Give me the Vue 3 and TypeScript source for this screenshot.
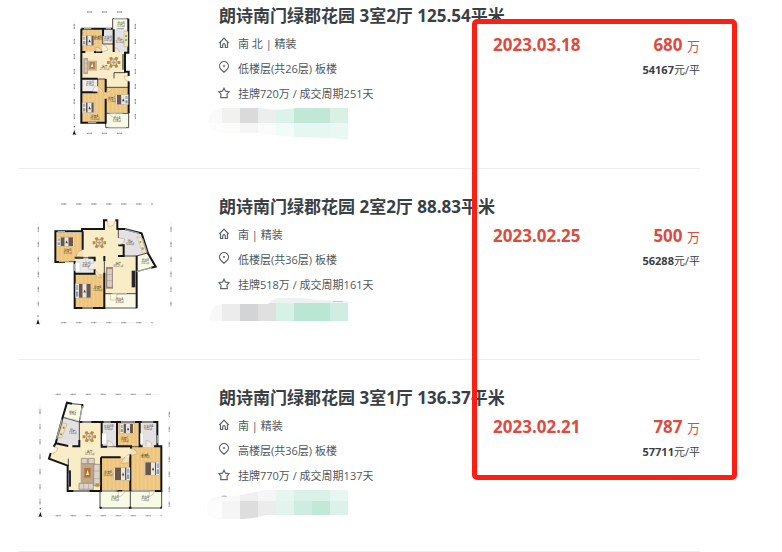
<script setup lang="ts">
type Shape = { d: string; fill: string }
type Spot = { x: number; y: number; w: number; h: number; side?: 'left' | 'right' }
type Label = { x: number; y: number; name: string; area: string }
type Plan = {
  shift: string
  rooms: Shape[]
  walls: string
  thin: string
  doors: string
  windows: string
  beds: Spot[]
  table: { x: number; y: number }
  labels: Label[]
  rulers: string
  compass: { x: number; y: number }
  kind: 'tall' | 'wide' | 'large'
}
type Cell = [number, number, number, number, string]
type Listing = {
  title: string
  facing: string
  floor: string
  cycle: string
  date: string
  total: string
  unit: string
  plan: Plan
  cells: Cell[]
  mask: string
  top: number
}

const wood = 'url(#wood)'
const cream = '#f9edc8'
const grey = '#e3e1e3'
const pale = '#f8fae6'

const tall: Plan = {
  kind: 'tall',
  shift: 'translate(105 3)',
  rooms: [
    { d: 'M158 56H205V88H158Z', fill: pale },
    { d: 'M66 155H195V215H206V262H137V237H66Z', fill: cream },
    { d: 'M66 88H127V155H66Z', fill: wood },
    { d: 'M129 88H160V132H129Z', fill: grey },
    { d: 'M129 132H162V160H129Z', fill: cream },
    { d: 'M163 88H205V156H163Z', fill: grey },
    { d: 'M66 237H137V368H66Z', fill: wood },
    { d: 'M66 237H113V277H66Z', fill: '#eeedef' },
    { d: 'M137 262H206V338H137Z', fill: wood },
    { d: 'M137 340H206V383H137Z', fill: pale }
  ],
  walls: 'M64 86H158M64 86V368H137V341M205 56V158H195V215H206V228M206 244V340M64 236H113M64 156H76M102 156H127M66 277H112M129 88V108M161 88V156M137 237V277M137 296V368',
  thin: 'M158 56H205M158 56V86M128 108V132H160M113 237V258M113 237H137V262M162 218H195M162 218V235M137 262H206M137 340H206M137 340V383H206V340',
  doors: 'M108 157V142Q124 142 124 156M129 134Q141 136 144 150L130 155M163 144Q178 144 178 157M206 228H193Q193 243 206 244M113 258Q100 258 98 275L113 276M113 258Q128 266 133 288M147 338Q150 350 160 352Q168 352 169 340M137 276Q153 276 157 263',
  windows: 'M72 86H94M137 86H153M170 86H192M84 368H109M162 56H200M145 383H198M163 340H188',
  beds: [
    { x: 67, y: 106, w: 37, h: 31, side: 'left' },
    { x: 67, y: 307, w: 37, h: 31, side: 'left' },
    { x: 168, y: 284, w: 37, h: 30, side: 'right' }
  ],
  table: { x: 161, y: 187 },
  labels: [
    { x: 114, y: 113, name: '卧室B', area: '8.35㎡' },
    { x: 144, y: 114, name: '卫生间', area: '3.41㎡' },
    { x: 180, y: 121, name: '厨房', area: '6.12㎡' },
    { x: 183, y: 72, name: '阳台B', area: '3.20㎡' },
    { x: 134, y: 202, name: '客厅', area: '27.31㎡' },
    { x: 90, y: 250, name: '卫生间', area: '4.16㎡' },
    { x: 104, y: 352, name: '卧室A', area: '15.03㎡' },
    { x: 155, y: 297, name: '卧室C', area: '11.4㎡' },
    { x: 171, y: 358, name: '阳台A', area: '6.08㎡' }
  ],
  rulers: 'M66 36H205M43 57V388M226 57V380M66 400H205',
  compass: { x: 43, y: 399 }
}

const wide: Plan = {
  kind: 'wide',
  shift: 'translate(0 0)',
  rooms: [
    { d: 'M173 120H237V93H277V118H280V166H296V198H335V311H238V252H208V203H173Z', fill: cream },
    { d: 'M93 128H173V213H93Z', fill: wood },
    { d: 'M280 119L348 131L367 188L335 199H296V167H280Z', fill: grey },
    { d: 'M335 199L367 189L391 230L335 245Z', fill: pale },
    { d: 'M149 203H208V250H149Z', fill: '#e9e8ea' },
    { d: 'M149 252H238V354H149Z', fill: wood },
    { d: 'M240 311H335V353H240Z', fill: pale }
  ],
  walls: 'M120 216H91V124H171V117H237V91H247M271 91H277V117H298L350 130L369 190L392 230L378 233M149 213V354H238V248M173 124V179M149 203H175M190 203H209V214M209 238V251H149M280 166H296V198H279M335 197V355M238 198V214',
  thin: 'M120 215H149M280 118V144M335 245L390 230M296 198H335L367 189M238 214V354H335M240 311H335M173 203H209',
  doors: 'M247 92L250 110Q267 112 270 92M281 143L299 147Q298 162 281 165M173 181Q158 180 154 199L172 201M210 240L230 263Q213 262 211 251M256 311V330H273Q276 319 276 311M209 218Q192 218 189 237L208 239',
  windows: 'M98 125H120M300 119L342 130M352 145L366 188M102 215H132M172 354H204M250 354H326M149 222V242M335 245L380 232M262 311H306',
  beds: [
    { x: 96, y: 141, w: 51, h: 28, side: 'left' },
    { x: 151, y: 281, w: 49, h: 43, side: 'left' }
  ],
  table: { x: 223, y: 158 },
  labels: [
    { x: 128, y: 183, name: '卧室B', area: '9.22㎡' },
    { x: 316, y: 157, name: '厨房', area: '6.60㎡' },
    { x: 361, y: 214, name: '阳台B', area: '3.61㎡' },
    { x: 184, y: 222, name: '卫生间', area: '4.46㎡' },
    { x: 280, y: 223, name: '客厅', area: '30.21㎡' },
    { x: 218, y: 295, name: '卧室A', area: '13.45㎡' },
    { x: 284, y: 331, name: '阳台A', area: '4.93㎡' }
  ],
  rulers: 'M94 42H384M40 95V349M438 95V349M94 398H384',
  compass: { x: 39, y: 397 }
}

const large: Plan = {
  kind: 'large',
  shift: 'translate(0 -3)',
  rooms: [
    { d: 'M125 70L172 74L163 126L115 112Z', fill: pale },
    { d: 'M163 128H229V200H318V232H229V332H130V258L73 236L92 192L163 200Z', fill: cream },
    { d: 'M114 112L163 126V199L94 190Z', fill: grey },
    { d: 'M230 128H276V199H230Z', fill: grey },
    { d: 'M277 128H343V200H277Z', fill: wood },
    { d: 'M344 128H397V199H344Z', fill: grey },
    { d: 'M230 232H316V332H230Z', fill: wood },
    { d: 'M317 200H410V332H317Z', fill: wood },
    { d: 'M225 333H315V384H225Z', fill: pale },
    { d: 'M316 333H410V384H316Z', fill: pale }
  ],
  walls: 'M141 71L126 68L113 112L92 190L86 200M77 219L72 236L128 257V333H228V232M164 126H397V199H409V333H390M92 190L130 198M142 199H163V180M230 128V200H246M276 126V199H318V206M344 126V199H353M387 199H409M228 232H287M316 223V333M272 333H292M172 72V83M224 383H230M312 383H319M406 383H410',
  thin: 'M140 71L172 74L163 126M115 112L163 126V181M247 200H277M277 200H344M225 333H410M225 333V384H410V333M316 333V384M130 236V258',
  doors: 'M88 201L98 205Q94 222 78 219M120 112Q137 122 149 118L163 125M247 200V182Q265 184 265 199M314 222Q297 228 288 250L310 248M317 205Q334 208 337 222L318 227M363 199V182Q381 182 381 199M280 333V350Q296 348 298 334M373 333V350Q386 347 389 334',
  windows: 'M172 126H199M236 126H257M288 126H330M350 126H385M95 177L111 118M132 278V316M145 333H194M397 166V190M234 384H308M322 384H404M324 333H371M234 333H278M172 78L165 119',
  beds: [
    { x: 285, y: 131, w: 42, h: 29, side: 'left' },
    { x: 267, y: 262, w: 48, h: 39, side: 'right' },
    { x: 358, y: 246, w: 46, h: 40, side: 'right' }
  ],
  table: { x: 193, y: 170 },
  labels: [
    { x: 143, y: 98, name: '阳台C', area: '3.7㎡' },
    { x: 143, y: 154, name: '厨房', area: '7.62㎡' },
    { x: 251, y: 141, name: '卫生间B', area: '5.32㎡' },
    { x: 299, y: 178, name: '卧室C', area: '7.68㎡' },
    { x: 370, y: 141, name: '卫生间A', area: '5.62㎡' },
    { x: 194, y: 216, name: '客厅', area: '37.51㎡' },
    { x: 249, y: 279, name: '卧室B', area: '14.22㎡' },
    { x: 360, y: 227, name: '卧室A', area: '18.76㎡' },
    { x: 270, y: 354, name: '阳台B', area: '5.75㎡' },
    { x: 361, y: 354, name: '阳台A', area: '7.24㎡' }
  ],
  rulers: 'M77 43H406M45 73V396M433 80V380M77 407H410',
  compass: { x: 46, y: 405 }
}

const listings: Listing[] = [
  {
    title: '朗诗南门绿郡花园 3室2厅 125.54平米',
    facing: '南 北 | 精装',
    floor: '低楼层(共26层) 板楼',
    cycle: '挂牌720万 / 成交周期251天',
    date: '2023.03.18',
    total: '680',
    unit: '54167',
    plan: tall,
    top: 315,
    mask: 'M66 324H175Q215 331 255 328L290 324H444V419L390 414L280 411L175 399H66Q25 392 25 362Q28 328 66 324Z',
    cells: [
      [20, 324, 46, 45, '#fafafa'], [66, 324, 54, 45, '#f1f1f0'], [120, 324, 54, 45, '#dadada'],
      [174, 324, 54, 45, '#eceded'], [228, 324, 54, 45, '#dcf3ea'], [282, 324, 108, 45, '#c1e8d7'],
      [390, 324, 54, 45, '#d9f0e5'], [20, 369, 100, 51, '#fcfcfb'], [120, 369, 54, 51, '#f5f5f6'],
      [174, 369, 54, 51, '#fafbfb'], [228, 369, 54, 51, '#f1fbf8'], [282, 369, 108, 51, '#e6f6f1'],
      [390, 369, 54, 51, '#eaf8f4']
    ]
  },
  {
    title: '朗诗南门绿郡花园 2室2厅 88.83平米',
    facing: '南 | 精装',
    floor: '低楼层(共36层) 板楼',
    cycle: '挂牌518万 / 成交周期161天',
    date: '2023.02.25',
    total: '500',
    unit: '56288',
    plan: wide,
    top: 318,
    mask: 'M66 342H205Q215 324 240 324H310Q350 330 444 334L458 338H444V393H30Q28 345 66 342Z',
    cells: [
      [200, 324, 258, 15, '#edf2f0'], [20, 339, 46, 54, '#f8f8f8'], [66, 339, 54, 54, '#ececec'],
      [120, 339, 54, 54, '#d2d4d6'], [174, 339, 54, 54, '#e0e0e0'], [228, 339, 54, 54, '#d6f1e6'],
      [282, 339, 108, 54, '#bae7d4'], [390, 339, 54, 54, '#d0ede1'], [400, 332, 30, 4, '#a9dcc6']
    ]
  },
  {
    title: '朗诗南门绿郡花园 3室1厅 136.37平米',
    facing: '南 | 精装',
    floor: '高楼层(共36层) 板楼',
    cycle: '挂牌770万 / 成交周期137天',
    date: '2023.02.21',
    total: '787',
    unit: '57711',
    plan: large,
    top: 321,
    mask: 'M64 350Q72 342 80 349L120 345Q160 338 190 330H444V405H200Q160 416 130 417H45Q20 415 20 382Q22 350 64 350Z',
    cells: [
      [20, 330, 100, 32, '#f9f9f9'], [120, 330, 54, 32, '#f0f0f0'], [174, 330, 54, 32, '#f6f6f6'],
      [228, 330, 54, 32, '#e6f6f0'], [282, 330, 108, 32, '#d9f1e7'], [390, 330, 54, 32, '#e6f6f1'],
      [20, 362, 46, 55, '#fcfcfc'], [66, 362, 54, 55, '#f5f5f5'], [120, 362, 54, 55, '#dddddd'],
      [174, 362, 54, 55, '#ececec'], [228, 362, 54, 55, '#e3f4ee'], [282, 362, 54, 55, '#ceecdf'],
      [336, 362, 54, 55, '#c2e8d8'], [390, 362, 54, 55, '#dcf2e9'], [64, 344, 16, 6, '#c4c6c7']
    ]
  }
]
</script>

<template>
  <main class="page">
    <svg class="defs" aria-hidden="true">
      <defs>
        <pattern id="wood" width="12" height="24" patternUnits="userSpaceOnUse">
          <rect width="12" height="24" fill="#eec780" />
          <rect width="4" height="24" fill="#f1cd8a" />
          <path d="M8 0V24" stroke="#e8bf72" />
        </pattern>
      </defs>
    </svg>

    <ul class="list">
      <li v-for="(item, i) in listings" :key="item.title" class="row">
        <a class="thumb" href="#" :aria-label="item.title">
          <svg class="plan" viewBox="0 0 480 450" aria-hidden="true">
            <g :transform="item.plan.shift">
              <path v-for="room in item.plan.rooms" :key="room.d" :d="room.d" :fill="room.fill" />
              <path :d="item.plan.thin" fill="none" stroke="#4e4a48" stroke-width="3" />
              <path :d="item.plan.walls" fill="none" stroke="#151515" stroke-width="6" />
              <path :d="item.plan.windows" fill="none" stroke="#a9a9a9" stroke-width="4" />
              <path :d="item.plan.doors" fill="#fff8e4" fill-opacity="0.5" stroke="#8b7c62" stroke-width="1" />

              <g v-for="bed in item.plan.beds" :key="bed.x + '-' + bed.y">
                <rect :x="bed.x" :y="bed.y" :width="bed.w" :height="bed.h" fill="#f1eeec" stroke="#a79682" />
                <rect :x="bed.side === 'left' ? bed.x + 11 : bed.x + 3" :y="bed.y + 1" :width="bed.w - 14" :height="bed.h - 2" fill="#6b5648" />
                <rect :x="bed.x + bed.w / 2 - 3" :y="bed.y + 1" width="12" :height="bed.h - 2" fill="#eae6e4" />
                <path :d="`M${bed.x + bed.w / 2} ${bed.y + bed.h / 2 + 5}l3 -9l4 9z`" fill="#3c3834" />
                <rect :x="bed.side === 'left' ? bed.x + 2 : bed.x + bed.w - 9" :y="bed.y + 4" width="7" :height="bed.h / 2 - 6" fill="#a4b4be" />
                <rect :x="bed.side === 'left' ? bed.x + 2 : bed.x + bed.w - 9" :y="bed.y + bed.h / 2 + 2" width="7" :height="bed.h / 2 - 6" fill="#7fa2b4" />
              </g>

              <g :transform="`translate(${item.plan.table.x} ${item.plan.table.y})`">
                <path d="M-14 -14l8 -3 5 8 -8 6zM14 -14l-8 -3 -5 8 8 6zM-14 14l8 3 5 -8 -8 -6zM14 14l-8 3 -5 -8 8 -6zM-20 -4h8v9h-8zM12 -4h8v9h-8z" fill="#c2863f" />
                <circle r="10" fill="#e9d9b9" stroke="#a87942" stroke-width="2" />
                <path d="M-6 0H6M0 -6V6" stroke="#8b9f9a" stroke-width="3" />
              </g>

              <g v-if="item.plan.kind === 'tall'">
                <path d="M70 174H84V222H70Z" fill="#b6a799" />
                <path d="M73 178H82V218H73ZM73 191H82M73 205H82" fill="#d7cabb" stroke="#9a8a7c" />
                <rect x="84" y="182" width="27" height="30" fill="#c5b49d" />
                <rect x="88" y="186" width="17" height="21" fill="#b58547" />
                <path d="M92 201L97 190L100 201Z" fill="#eee" />
                <path d="M192 94H204V140H192Z" fill="#eee8b8" stroke="#9c9370" />
                <circle cx="198" cy="108" r="3" fill="#8c8058" /><circle cx="198" cy="120" r="3" fill="#8c8058" />
                <path d="M189 162V209" stroke="#4a4541" stroke-width="4" />
              </g>
              <g v-else-if="item.plan.kind === 'wide'">
                <path d="M243 231H264V296H243Z" fill="#9c8579" />
                <path d="M246 236H262V291H246ZM246 254H262M246 272H262" fill="#d9cdc5" stroke="#8b766b" />
                <rect x="320" y="242" width="11" height="50" fill="#292725" />
                <path d="M336 140L350 144L363 186L353 190Z" fill="#f3ecc4" stroke="#9a8b60" />
                <circle cx="346" cy="156" r="3" fill="#b09355" /><circle cx="353" cy="176" r="4" fill="#aaa38f" />
                <rect x="151" y="217" width="14" height="29" rx="3" fill="#fff" stroke="#aaa" />
                <path d="M182 204V216M150 203H200" stroke="#aaa" />
              </g>
              <g v-else>
                <rect x="167" y="250" width="45" height="59" fill="#c1a58b" />
                <path d="M169 235H187V251H169ZM190 235H208V251H190ZM206 253H225V317H206ZM162 310H205V328H162Z" fill="#dbd2c8" stroke="#897a6d" stroke-width="2" />
                <path d="M206 273H225M206 296H225M176 310V328M191 310V328" stroke="#897a6d" />
                <rect x="178" y="264" width="19" height="29" fill="#ad7637" />
                <path d="M183 285L188 269L192 285Z" fill="#f3e6c2" />
                <rect x="131" y="271" width="7" height="49" fill="#292725" />
                <path d="M113 128L126 132L110 174L99 172Z" fill="#eee3b2" stroke="#8c8058" />
                <circle cx="116" cy="143" r="3" fill="#8c8058" /><circle cx="108" cy="163" r="3" fill="#8c8058" />
                <rect x="211" y="310" width="11" height="10" fill="#c98b31" />
                <path d="M231 160H245V192H231ZM346 160H355V192H346Z" fill="#fff" stroke="#bbb" />
              </g>

              <g v-for="label in item.plan.labels" :key="label.name + label.x" class="room-name">
                <text :x="label.x" :y="label.y">{{ label.name }}</text>
                <text :x="label.x" :y="label.y + 8">{{ label.area }}</text>
              </g>

              <path :d="item.plan.rulers" fill="none" stroke="#dedede" stroke-width="1" />
              <path :d="item.plan.rulers" fill="none" stroke="#969696" stroke-width="4" stroke-dasharray="3 1 3 1 3 1 3 30" stroke-dashoffset="-15" />
              <g :transform="`translate(${item.plan.compass.x} ${item.plan.compass.y})`">
                <circle r="8" fill="none" stroke="#ddd" />
                <path d="M0 -9L5 6L0 4L-5 6Z" fill="#111" />
                <rect x="-2" y="-21" width="4" height="4" fill="#777" />
              </g>
            </g>
          </svg>
        </a>

        <div class="info">
          <h2 class="title"><a href="#">{{ item.title }}</a></h2>
          <p class="fact">
            <svg class="icon" viewBox="0 0 12 12" aria-hidden="true">
              <path d="M1.300 6L6 1.200L10.700 6M2.500 5V10.500H4.700V8A1.300 1.300 0 0 1 7.300 8V10.500H9.500V5" />
            </svg>
            <span>{{ item.facing }}</span>
          </p>
          <p class="fact">
            <svg class="icon pin" viewBox="0 0 12 12" aria-hidden="true">
              <path d="M6 11.200L2.800 8.200A4.500 4.500 0 1 1 9.200 8.200Z" />
              <circle class="dot" cx="6" cy="5" r="1" />
            </svg>
            <span>{{ item.floor }}</span>
          </p>
          <p class="fact">
            <svg class="icon" viewBox="0 0 12 12" aria-hidden="true">
              <path d="M6 1.200L7.500 4.200L11 4.700L9 7.200L9.300 10.700H2.700L3 7.200L1 4.700L4.500 4.200Z" />
            </svg>
            <span>{{ item.cycle }}</span>
          </p>
          <svg class="mosaic" :viewBox="`18 ${item.top} 450 105`" aria-hidden="true" shape-rendering="crispEdges">
            <clipPath :id="`mask-${i}`"><path :d="item.mask" /></clipPath>
            <g :clip-path="`url(#mask-${i})`">
              <rect v-for="(c, n) in item.cells" :key="n" :x="c[0]" :y="c[1]" :width="c[2]" :height="c[3]" :fill="c[4]" />
            </g>
          </svg>
        </div>

        <div class="deal">
          <time class="date">{{ item.date }}</time>
          <div class="price">
            <p class="total"><b>{{ item.total }}</b> <span class="wan">万</span></p>
            <p class="unit"><b>{{ item.unit }}</b>元/平</p>
          </div>
        </div>
      </li>
    </ul>

    <div class="marker"></div>
  </main>
</template>

<style>
body {
  margin: 0;
  background: #fff;
}
</style>

<style scoped>
.page {
  position: relative;
  overflow: hidden;
  font-family: "Open Sans", "Noto Sans CJK SC", sans-serif;
  font-size: 11px;
  color: #394043;
}
.defs {
  position: absolute;
  width: 0;
  height: 0;
}
.list {
  list-style: none;
  margin: -22px 82px 0 18px;
  padding: 0;
}
.row {
  display: grid;
  grid-template-columns: 201px minmax(0, 1fr) 207px;
  min-height: 190px;
  border-bottom: 1px solid #eee;
}
.row:last-child {
  min-height: 191px;
}
.thumb {
  padding: 21px 0 0 7px;
}
.plan {
  display: block;
  width: 160px;
  height: 150px;
}
.room-name {
  font-size: 8px;
  fill: #3d3425;
  text-anchor: middle;
}
.info {
  position: relative;
  padding-top: 26px;
}
.title {
  margin: 0 0 3px;
  font-size: 17px;
  line-height: 24px;
  font-weight: 700;
  white-space: nowrap;
}
.title a {
  color: inherit;
  text-decoration: none;
}
.fact {
  display: flex;
  align-items: center;
  gap: 8px;
  margin: 0;
  line-height: 25px;
  color: #50575b;
  white-space: nowrap;
}
.icon {
  width: 12px;
  height: 12px;
  margin-left: -1px;
  margin-bottom: 2px;
  fill: none;
  stroke: #5f6669;
  stroke-width: 1.2;
}
.pin {
  margin-bottom: 4px;
}
.dot {
  fill: #5f6669;
  stroke: none;
}
.mosaic {
  position: absolute;
  left: -13px;
  top: 127px;
  width: 150px;
  height: 35px;
}
.deal {
  display: flex;
  justify-content: space-between;
  padding-top: 55px;
  line-height: 24px;
  white-space: nowrap;
}
.date,
.total {
  font-size: 17px;
  color: #db4c3f;
}
.date,
.price b {
  font-weight: 700;
}
.price {
  text-align: right;
}
.price p {
  margin: 0;
}
.wan {
  font-size: 13px;
}
.marker {
  position: absolute;
  left: 472px;
  right: 45px;
  top: 19px;
  bottom: 72px;
  box-sizing: border-box;
  border: 5px solid #ff1e12;
  border-radius: 5px;
  pointer-events: none;
}
</style>
